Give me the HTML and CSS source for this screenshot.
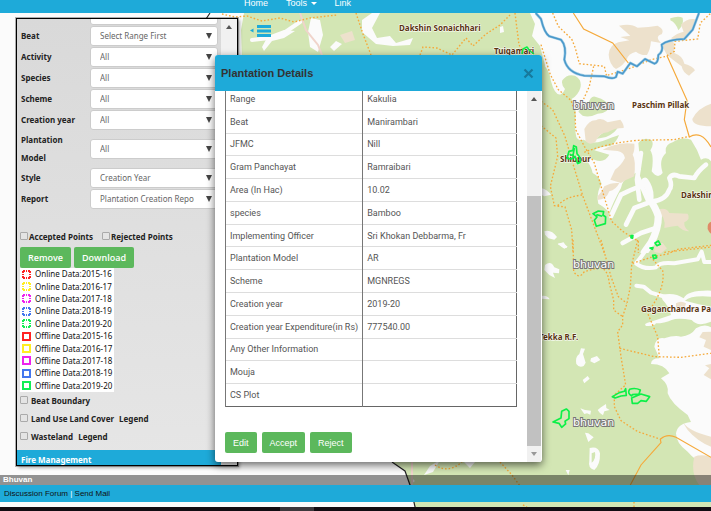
FILE: index.html
```html
<!DOCTYPE html>
<html lang="en">
<head>
<meta charset="utf-8">
<title>Bhuvan Plantation Monitoring</title>
<link rel="stylesheet" href="styles.css">
</head>
<body>
<svg class="map" viewBox="0 0 711 511" preserveAspectRatio="xMaxYMin slice" role="img" aria-label="Map">
  <rect width="711" height="511" fill="#fbfbfb"/>
  <path fill="#d3e6b4" d="M244 13H530L535 24L532 36L540 46L545 65V511H416L410 485L405 470L392 462L300 300L242 60L241 30Z"/>
  <path fill="#ede1cc" d="M340 35L352 31L355 40L345 43Z"/>
  <g fill="#fbfbfb">
    <path d="M311 18L320 20L323 35L318 52L310 47L308 32ZM268 36L284 30L295 31L284 38L272 41L264 51L262 47ZM362 20L372 13H380L372 28L377 38L390 36L396 43L413 38L410 45L393 46L376 44L362 32ZM500 27L503 26L504 32L500 33ZM330 47L336 41L342 44L334 51Z"/>
    <path d="M430 466L440 460L433 472L424 475ZM464 462H475L470 468ZM412 478L415 481L411 484Z"/>
  </g>
  <path fill="none" stroke="#fbfbfb" stroke-width="4" stroke-linecap="round" d="M252 40L278 37L300 22"/>
  <path fill="none" stroke="#f0d4cb" stroke-width="2" d="M300 13L306 30L318 45L322 55M412 462V485"/>

  <!-- north-east sheet -->
  <g transform="translate(541 13) scale(.3333)">
    <g fill="#d3e6b4">
      <path d="M0 150Q25 165 30 205Q42 250 60 244Q70 236 72 228Q60 215 64 202Q78 182 102 188Q124 200 118 225Q112 246 92 258Q105 280 104 310Q100 350 106 372Q112 385 128 380Q150 395 185 384Q215 372 234 366Q228 385 210 398Q175 400 160 412L205 425Q190 452 160 440L128 432Q150 455 155 480Q175 490 182 512Q165 540 172 572Q195 585 205 600Q215 570 240 525Q245 500 265 490Q285 480 300 470L292 390Q310 370 332 382Q340 395 328 412Q340 430 332 475Q350 500 365 480Q352 440 375 420Q370 395 395 388Q420 370 450 380Q470 410 480 440Q500 430 510 445V730H0Z"/>
      <path d="M112 296Q120 280 142 272Q150 245 165 252Q200 262 202 280Q205 300 170 302Q145 315 125 308ZM388 16Q410 8 425 14Q430 35 412 52Q405 30 388 22ZM165 378Q190 350 232 340Q225 360 195 372Z"/>
    </g>
    <g fill="#ede1cc">
      <path d="M234 38Q270 30 290 44Q325 42 350 38Q372 50 362 64Q340 70 360 90L330 85Q328 110 318 126Q300 128 285 116Q262 122 258 138Q245 160 225 168Q205 155 203 125Q205 95 232 88L265 82L238 72L268 68ZM420 35Q440 12 470 20Q460 50 435 76Q410 88 390 76Q408 60 428 56ZM360 92Q388 78 400 90L400 120Q425 128 430 152Q455 158 462 172L444 188Q425 178 422 160Q395 140 378 126ZM130 348Q145 320 165 322Q180 312 200 328L238 320Q250 335 248 345Q220 345 200 358Q172 360 165 385Q148 400 134 385ZM510 272Q470 285 454 318Q455 340 510 340Z"/>
      <path d="M185 410Q230 385 280 392Q282 412 275 425Q285 440 280 490Q255 500 240 510L208 500L222 470Q240 458 252 435Q250 418 230 414ZM170 550Q185 535 190 520Q210 508 235 510Q225 530 205 535Q195 562 170 560ZM352 590Q375 582 385 600L440 602Q450 618 430 628Q428 645 445 655Q425 655 410 638Q388 640 370 645Q375 610 352 600ZM342 690L365 690L375 705L355 715Z"/>
    </g>
    <path fill="#e08a67" d="M510 626Q498 630 500 648Q505 660 510 662Z"/>
    <g fill="#fbfbfb">
      <path d="M0 525Q20 530 30 545L10 550L0 545ZM10 655Q30 648 48 672L40 680L22 676L12 665ZM50 692L68 688L78 705H68Z"/>
    </g>
    <g fill="none" stroke="#fbfbfb" stroke-linecap="round" stroke-linejoin="round">
      <path stroke-width="22" d="M312 505Q330 530 326 560Q345 585 352 610Q352 650 330 690L310 718"/>
      <path stroke-width="14" d="M300 420L288 500L295 560M310 515Q270 530 240 545L210 610M320 570L280 585L255 635M345 645L300 660L245 690M335 565Q375 560 385 530Q395 520 385 495Q395 480 415 490L460 495Q470 475 495 455M290 490L320 560"/>
    </g>
    <g fill="none" stroke="#f5a93a" stroke-width="4">
      <path stroke-dasharray="5 6" d="M35 0L52 40L92 78L103 105L115 152L190 160L197 190M158 160L145 220L128 258M0 95L28 185L52 230L90 262L102 300L104 350L130 400L160 450L180 520L212 625L245 655L292 685V720M0 265L35 290L72 370L92 440L125 548L190 720M0 338L45 375L50 430L28 520L40 578L72 582L92 650L96 720M50 578Q75 550 125 546M130 418Q200 390 290 382L400 380L445 370M190 190L270 165L330 140L375 130L400 115L402 85L470 78L478 30L510 0M370 718L510 702"/>
      <path d="M97 0L128 48L215 90L262 150M378 128L438 262L430 320L445 372Q480 350 510 402" stroke-width="3.500"/>
    </g>
    <path fill="none" stroke="#9ccbe6" stroke-width="8" stroke-linejoin="round" d="M-16 0L0 18Q10 60 25 70L60 80Q78 100 70 140Q80 180 130 188L190 190Q215 200 225 192L230 176L245 182L268 150L288 160L312 138L340 152Q352 150 352 126Q368 115 362 95Q380 80 430 78L455 50L474 0"/>
    <path fill="none" stroke="#4a98c9" stroke-width="4.500" stroke-linejoin="round" d="M-16 0L0 18Q10 60 25 70L60 80Q78 100 70 140Q80 180 130 188L190 190Q215 200 225 192L230 176L245 182L268 150L288 160L312 138L340 152Q352 150 352 126Q368 115 362 95Q380 80 430 78L455 50L474 0"/>
  </g>

  <!-- south-east sheet -->
  <g transform="translate(541 240) scale(.3333)">
    <path fill="#d3e6b4" d="M0 39H510V810H0Z"/>
    <g fill="#fbfbfb">
      <path d="M340 320Q345 290 370 295Q400 285 420 290Q450 288 465 265Q490 250 510 262V685Q460 660 440 635Q405 610 405 580Q410 550 450 546L440 525Q390 490 380 460Q385 435 360 415L385 400Q370 372 330 372Q330 355 355 355Z"/>
      <path d="M360 165Q400 155 428 175Q440 150 510 152V170Q450 165 432 182L470 192L510 200V245Q470 262 452 240Q410 232 392 240Q370 250 345 250Q340 260 315 258Q305 250 330 245L390 225Q385 200 365 180Z"/>
      <path d="M12 75Q30 60 40 82L55 88L54 100L36 98L42 114L25 105L10 90ZM0 168Q20 165 26 178L0 176ZM50 12L66 8L80 20L70 26ZM120 325L132 326L126 342L134 368L128 378Q115 385 106 372Q102 350 115 342ZM150 355L168 348L178 360L160 370L148 364ZM125 420L140 408L146 416L130 430ZM118 505L132 510L150 512L148 524L138 520L130 522ZM170 510L180 502L195 492L196 504L206 510L190 514L186 526L176 518ZM132 578L142 580L158 592L142 606ZM74 690L86 690L82 706Z"/>
      <path fill-rule="evenodd" d="M146 624Q172 618 177 640Q178 675 160 690Q140 685 145 662ZM152 640L152 668Q166 658 162 636Z"/>
    </g>
    <path fill="none" stroke="#fbfbfb" stroke-width="12" stroke-linecap="round" stroke-linejoin="round" d="M335 0Q310 40 285 70Q310 90 345 82Q355 65 400 70L470 58L482 35L490 66H510M286 137L308 140L330 158L370 170"/>
    <g fill="#ede1cc">
      <path d="M425 546Q445 575 510 590V620Q470 605 440 570ZM460 650Q480 642 510 650V735H475Q448 700 460 650ZM510 275L485 276L475 292L495 300L488 320L510 330ZM510 372L492 376L505 385L488 405L510 418ZM405 190Q420 180 435 190L430 205L405 202ZM340 20L365 10L378 25L360 40L340 36Z"/>
    </g>
    <g fill="none" stroke="#f5a93a" stroke-width="4">
      <path stroke-dasharray="5 6" d="M96 0L98 95Q115 120 130 95L175 82Q200 85 205 130L218 180V210L245 230M180 0L210 110L232 170L258 190M290 0L272 75L268 140L258 190L245 230V255L230 275L240 350L254 435L220 465V500L240 542L290 575L360 598M275 70L330 52L365 92Q372 130 345 180L320 220L350 290L355 352M335 50L380 42L410 28L510 16M236 325L340 350L420 352L510 340"/>
      <path d="M268 735L300 675L360 608L358 598Q378 580 405 592L510 652" stroke-width="3.500"/>
    </g>
  </g>

  <g fill="none" stroke="#f5a93a" stroke-width="1.4" stroke-dasharray="1.600 2">
    <path d="M222 14L235 17L247 16L262 21L280 18L294 22L310 18L337 15M356 13L363 34L371 55M420 55L423 47L437 48L452 55L466 38L473 46L486 34L500 25L510 15M515 13L519 45L527 55M500 462L512 475L520 486M435 465Q448 474 462 462M523 505L527 507M634 502V511"/>
  </g>
  <!-- district boundary -->
  <path fill="none" stroke="#222" stroke-width="1.2" d="M210 13L206 19M392 462L405 471L410 485L416 511"/>
  <g class="place">
    <text x="399" y="31">Dakshin Sonaichhari</text>
    <text x="494" y="54">Tuigamari</text>
    <text x="632" y="108">Paschim Pillak</text>
    <text x="560" y="162">Shibpur</text>
    <text x="681" y="198">Dakshin</text>
    <text x="641" y="312">Gaganchandra Para</text>
    <text x="539" y="340">Tekka R.F.</text>
  </g>
  <!-- plantation plots -->
  <g fill="none" stroke="#0df048" stroke-width="1.5" stroke-linejoin="round">
    <path d="M522 54L523 49L527 47L530 51L534 54"/>
    <g transform="translate(541 13) scale(.3333)" stroke-width="5">
      <path d="M78 436L84 415L96 412L98 398L106 402L108 422L116 432L118 448L110 452L102 430L92 438ZM100 405L96 428L86 424M156 602L172 594L188 596L186 606L194 612L193 632L166 640L160 622L168 612ZM166 605L184 610M270 668L276 668L274 676L270 674ZM342 690L352 684L358 694L348 698ZM327 705L336 704L334 709Z"/>
    </g>
    <g transform="translate(541 240) scale(.3333)" stroke-width="5">
      <path d="M335 46L344 45L347 53L338 56ZM214 470L235 458L250 454L254 446L256 466L240 468L222 474ZM272 468Q258 460 266 448Q282 442 298 450L294 462L274 464ZM274 490L272 474L300 462L326 470L316 484L300 482L290 490ZM36 546L60 534L62 514L76 507L84 514V536L72 544L74 552L62 562L54 550Z"/>
    </g>
  </g>
  <g class="watermark">
    <text x="573" y="109">bhuvan</text>
    <text x="573" y="268">bhuvan</text>
    <text x="573" y="426">bhuvan</text>
  </g>
</svg>

<nav class="nav">
  <a href="#home">Home</a>
  <a href="#tools">Tools <span class="caret"></span></a>
  <a href="#link">Link</a>
</nav>

<main class="main">
  <aside class="sidebar">
    <form class="filters">
      <div class="row"><span></span><span class="pick"><select aria-label="Range"><option></option></select></span></div>
      <div class="row"><label for="beat">Beat</label><span class="pick"><select id="beat"><option>Select Range First</option></select></span></div>
      <div class="row"><label for="activity">Activity</label><span class="pick"><select id="activity"><option>All</option></select></span></div>
      <div class="row"><label for="species">Species</label><span class="pick"><select id="species"><option>All</option></select></span></div>
      <div class="row"><label for="scheme">Scheme</label><span class="pick"><select id="scheme"><option>All</option></select></span></div>
      <div class="row"><label for="year">Creation year</label><span class="pick"><select id="year"><option>All</option></select></span></div>
      <div class="row"><label for="model">Plantation<br>Model</label><span class="pick"><select id="model"><option>All</option></select></span></div>
      <div class="row"><label for="style">Style</label><span class="pick"><select id="style"><option>Creation Year</option></select></span></div>
      <div class="row"><label for="report">Report</label><span class="pick"><select id="report"><option>Plantation Creation Report</option></select></span></div>
      <div class="points">
        <label><input type="checkbox">Accepted Points</label>
        <label><input type="checkbox">Rejected Points</label>
      </div>
      <div class="actions">
        <button type="button" class="btn">Remove</button>
        <button type="button" class="btn">Download</button>
      </div>
      <ul class="legend">
        <li><svg class="online red"><rect x="1" y="1" width="7" height="7"/></svg>Online Data:2015-16</li>
        <li><svg class="online yellow"><rect x="1" y="1" width="7" height="7"/></svg>Online Data:2016-17</li>
        <li><svg class="online magenta"><rect x="1" y="1" width="7" height="7"/></svg>Online Data:2017-18</li>
        <li><svg class="online blue"><rect x="1" y="1" width="7" height="7"/></svg>Online Data:2018-19</li>
        <li><svg class="online green"><rect x="1" y="1" width="7" height="7"/></svg>Online Data:2019-20</li>
        <li><svg class="red"><rect x="1" y="1" width="7" height="7"/></svg>Offline Data:2015-16</li>
        <li><svg class="yellow"><rect x="1" y="1" width="7" height="7"/></svg>Offline Data:2016-17</li>
        <li><svg class="magenta"><rect x="1" y="1" width="7" height="7"/></svg>Offline Data:2017-18</li>
        <li><svg class="blue"><rect x="1" y="1" width="7" height="7"/></svg>Offline Data:2018-19</li>
        <li><svg class="green"><rect x="1" y="1" width="7" height="7"/></svg>Offline Data:2019-20</li>
      </ul>
      <div class="layers">
        <div><label><input type="checkbox">Beat Boundary</label></div>
        <div><label><input type="checkbox">Land Use Land Cover</label> <a href="#lulc">Legend</a></div>
        <div><label><input type="checkbox">Wasteland</label> <a href="#wasteland">Legend</a></div>
      </div>
      <h2 class="section">Fire Management</h2>
    </form>
    <div class="track"><span class="up"></span></div>
  </aside>
  <button type="button" class="toggle" aria-label="Toggle panel">
    <svg width="21" height="12" viewBox="0 0 21 12" fill="#1eaad9"><path d="M0 5.500L3.500 3.500V7.500ZM7 0H21V3H7ZM7 4.500H21V7.500H7ZM7 9H21V12H7Z"/></svg>
  </button>
</main>

<div class="credit">Bhuvan</div>
<footer class="footer"><a href="#forum">Discussion Forum</a> <span>|</span> <a href="#mail">Send Mail</a></footer>
<div class="taskbar"><span></span></div>

<section class="modal" role="dialog" aria-labelledby="title">
  <header class="head">
    <h1 id="title">Plantation Details</h1>
    <button type="button" class="close" aria-label="Close"><svg width="11" height="11" viewBox="0 0 11 11"><path d="M1.500 1.500L9.500 9.500M9.500 1.500L1.500 9.500" stroke="#17799c" stroke-width="2.200"/></svg></button>
  </header>
  <div class="view">
    <div class="content">
      <table class="details">
        <tr><td>Range</td><td>Kakulia</td></tr>
        <tr><td>Beat</td><td>Manirambari</td></tr>
        <tr><td>JFMC</td><td>Nill</td></tr>
        <tr><td>Gram Panchayat</td><td>Ramraibari</td></tr>
        <tr><td>Area (In Hac)</td><td>10.02</td></tr>
        <tr><td>species</td><td>Bamboo</td></tr>
        <tr><td>Implementing Officer</td><td>Sri Khokan Debbarma, Fr</td></tr>
        <tr><td>Plantation Model</td><td>AR</td></tr>
        <tr><td>Scheme</td><td>MGNREGS</td></tr>
        <tr><td>Creation year</td><td>2019-20</td></tr>
        <tr><td>Creation year Expenditure(in Rs)</td><td>777540.00</td></tr>
        <tr><td>Any Other Information</td><td></td></tr>
        <tr><td>Mouja</td><td></td></tr>
        <tr><td>CS Plot</td><td></td></tr>
      </table>
      <div class="verdict">
        <button type="button" class="btn">Edit</button>
        <button type="button" class="btn">Accept</button>
        <button type="button" class="btn">Reject</button>
      </div>
    </div>
    <div class="track"><span class="up"></span><span class="thumb"></span><span class="down"></span></div>
  </div>
</section>
</body>
</html>
```
FILE: styles.css
```css
* { box-sizing: border-box; }

body {
  margin: 0;
  height: 100vh;
  display: flex;
  flex-direction: column;
  position: relative;
  overflow: hidden;
  font: 8px/12px "Noto Sans", sans-serif;
  color: #222;
}

a { color: inherit; text-decoration: none; }
button, select { font: inherit; }

.map {
  position: absolute;
  inset: 0;
  width: 100%;
  height: 100%;
  z-index: -1;
}
.place { font: bold 8px "Noto Sans", sans-serif; fill: #5a3410; stroke: #fff; stroke-width: 1px; paint-order: stroke; }
.watermark { font: 11px "DejaVu Sans", sans-serif; fill: #fff; stroke: #777; stroke-width: 2px; paint-order: stroke; }

.nav {
  height: 13px;
  flex: none;
  display: flex;
  align-items: flex-end;
  gap: 18px;
  padding: 0 0 4px 244px;
  background: #1eaad9;
  color: #fff;
  font: 9px/12px "Liberation Sans", sans-serif;
}
.caret {
  display: inline-block;
  margin-left: 1px;
  vertical-align: middle;
  border: 3px solid transparent;
  border-top-color: #fff;
  border-bottom: 0;
}

.main {
  flex: 1;
  min-height: 0;
  display: flex;
  align-items: stretch;
  gap: 12px;
  padding: 5px 16px 9px;
}
.sidebar {
  flex: 0 0 222px;
  display: flex;
  overflow: hidden;
  border: 1px solid #000;
  outline: 1px solid rgba(0, 0, 0, .3);
  background: linear-gradient(#d9d9d9, #e6e6e6);
  box-shadow: 2px 2px 3px rgba(0, 0, 0, .3);
}
.filters { flex: 1; min-width: 0; margin-top: -14px; }
.row {
  display: grid;
  grid-template-columns: 70px 1fr;
  align-items: center;
  min-height: 20px;
  margin: 0 3px 1px;
}
.row label {
  padding-left: 1px;
  font-weight: bold;
  line-height: 18px;
}
.pick { position: relative; display: block; }
.pick::after {
  content: "";
  position: absolute;
  right: 6px;
  top: 7px;
  border: 3px solid transparent;
  border-top: 6px solid #444;
  border-bottom: 0;
  pointer-events: none;
}
.pick select {
  appearance: none;
  display: block;
  width: 100%;
  height: 20px;
  padding: 0 23px 0 9px;
  border: 1px solid #ccc;
  border-radius: 3px;
  background: #fff;
  color: #666;
}

input[type="checkbox"] {
  appearance: none;
  width: 8px;
  height: 8px;
  margin: 0;
  border: 1px solid #aaa;
  border-radius: 1px;
  background: #e4e4e4;
}
.points {
  display: flex;
  gap: 9px;
  margin: 22px 3px 4px;
  font-weight: bold;
}
.points input { margin-right: 1px; }
.actions { display: flex; gap: 3px; margin-left: 3px; }
.btn {
  height: 21px;
  padding: 0 8px;
  border: 0;
  border-radius: 2px;
  background: #5cb85c;
  color: #fff;
}
.actions .btn { font: 600 9px "Open Sans", sans-serif; }

.legend {
  display: grid;
  width: 94px;
  height: 124px;
  margin: 0 0 0 3px;
  padding: 0 2px;
  list-style: none;
  background: #fff;
  color: #111;
  white-space: nowrap;
}
.legend li { display: flex; align-items: center; gap: 4px; }
.legend svg { flex: none; width: 9px; height: 9px; fill: none; stroke-width: 2px; }
.legend .online { stroke-dasharray: 2 1 1 1 2 0; }
.red { stroke: #f22; }
.yellow { stroke: #fe2; }
.magenta { stroke: #e2e; }
.blue { stroke: #47e; }
.green { stroke: #1e5; }

.layers { margin-left: 3px; font-weight: bold; line-height: 18px; }
.layers div { height: 18px; }
.layers input { margin-right: 3px; }
.layers a { margin-left: 3px; }
.section {
  margin: 4px 0 0;
  padding: 3px 4px;
  background: #1eaad9;
  color: #fff;
  font-size: 8px;
  line-height: 14px;
}

.track {
  flex: 0 0 16px;
  display: flex;
  flex-direction: column;
  align-items: center;
  background: #f1f1f1;
}
.up, .down { margin: 6px 0; border: 3px solid transparent; }
.up { border-top: 0; border-bottom: 4px solid #555; }
.down { border-bottom: 0; border-top: 4px solid #999; }
.thumb { width: 100%; flex: 1; margin-top: 89px; background: #c1c1c1; }

.toggle {
  align-self: flex-start;
  margin-top: 7px;
  padding: 0;
  border: 0;
  background: none;
  line-height: 0;
}

.credit {
  height: 10px;
  padding-left: 3px;
  background: rgba(0, 0, 0, .42);
  color: #fff;
  font: bold 8px/10px "Liberation Sans", sans-serif;
}
.footer {
  height: 17px;
  margin-bottom: 5px;
  padding-left: 4px;
  background: #1eaad9;
  color: #111;
  font: 8px/17px "Liberation Sans", sans-serif;
}
.footer span { color: #fff; }
.taskbar { height: 4px; padding-left: 280px; background: #120c12; }
.taskbar span { display: block; width: 34px; height: 4px; background: #3c383c; }

.modal {
  position: absolute;
  top: 55px;
  bottom: 49px;
  left: 215px;
  width: 327px;
  display: flex;
  flex-direction: column;
  overflow: hidden;
  border-radius: 3px;
  background: #fff;
  box-shadow: 0 3px 9px rgba(0, 0, 0, .6);
  font: 9px/12px "Roboto", sans-serif;
}
.head {
  display: flex;
  align-items: center;
  justify-content: space-between;
  height: 36px;
  flex: none;
  padding: 0 8px 0 6px;
  background: #1eaad9;
}
.head h1 { margin: 0; font: bold 11px/16px "Liberation Sans", sans-serif; color: #333; }
.close { padding: 0; border: 0; background: none; line-height: 0; }
.view { flex: 1; min-height: 0; display: flex; padding-right: 1px; }
.view .track { flex-basis: 14px; }
.content { flex: 1; padding: 0 10px; overflow: hidden; }
.details {
  width: 100%;
  height: 320px;
  margin-top: -4px;
  border-collapse: collapse;
  border: 1px solid #666;
  color: #555;
}
.details td {
  padding: 0 4px;
  border-top: 1px solid #ddd;
  border-left: 1px solid #777;
}
.details td:first-child { width: 46%; white-space: nowrap; }
.verdict { display: flex; gap: 5px; margin-top: 25px; }
.verdict .btn { font: 9px "Liberation Sans", sans-serif; }
```
